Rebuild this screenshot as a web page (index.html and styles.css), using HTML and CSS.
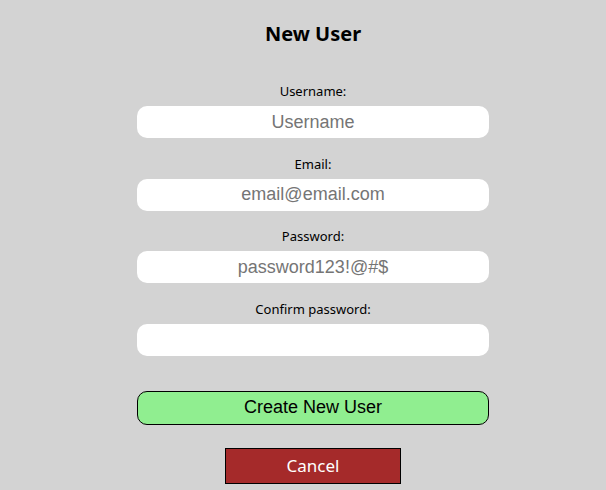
FILE: index.html
```html
<!DOCTYPE html>
<html>
<head>
<meta charset="utf-8">
<link rel="stylesheet" href="styles.css">
</head>
<body>
<main class="page">
  <h1 class="title">New User</h1>
  <form class="form">
    <label class="field">
      <span class="label">Username:</span>
      <input class="input" type="text" placeholder="Username">
    </label>
    <label class="field">
      <span class="label">Email:</span>
      <input class="input" type="text" placeholder="email@email.com">
    </label>
    <label class="field">
      <span class="label">Password:</span>
      <input class="input" type="text" placeholder="password123!@#$">
    </label>
    <label class="field">
      <span class="label">Confirm password:</span>
      <input class="input" type="text">
    </label>
    <button type="button" class="create">Create New User</button>
    <button type="button" class="cancel">Cancel</button>
  </form>
</main>
</body>
</html>
```

FILE: styles.css
```css
html, body {
  margin: 0;
  padding: 0;
  background: #d3d3d3;
}
body {
  font-family: "Noto Sans", "Open Sans", sans-serif;
  color: #000;
  height: 490px;
  overflow: hidden;
}
.page {
  display: flex;
  flex-direction: column;
  align-items: center;
  padding-left: 20px;
}
.title {
  margin: 20px 0 0;
  font-size: 20px;
  line-height: 27px;
  font-weight: 700;
}
.form {
  width: 352px;
  display: flex;
  flex-direction: column;
  align-items: center;
  margin-top: 35px;
}
.field {
  width: 100%;
  display: flex;
  flex-direction: column;
  align-items: center;
  gap: 6px;
  margin-bottom: 16.67px;
}
.label {
  font-size: 13px;
  line-height: 18px;
}
.input {
  box-sizing: border-box;
  width: 100%;
  height: 32px;
  border: none;
  border-radius: 10px;
  background: #fff;
  text-align: center;
  font-family: "Liberation Sans", Arial, sans-serif;
  font-size: 18px;
  padding: 0 8px;
  outline: none;
}
.input::placeholder {
  color: #757575;
}
.create {
  box-sizing: border-box;
  width: 100%;
  height: 34px;
  margin-top: 18.33px;
  background: #90ee90;
  border: 1px solid #000;
  border-radius: 10px;
  font-family: "Liberation Sans", Arial, sans-serif;
  font-size: 18px;
  color: #000;
  padding: 0;
}
.cancel {
  box-sizing: border-box;
  width: 176px;
  height: 36px;
  margin-top: 23px;
  background: #a52a2a;
  border: 1px solid #000;
  border-radius: 0;
  color: #fff;
  font-family: "Noto Sans", "Open Sans", sans-serif;
  font-size: 17px;
  padding: 0;
}
```
